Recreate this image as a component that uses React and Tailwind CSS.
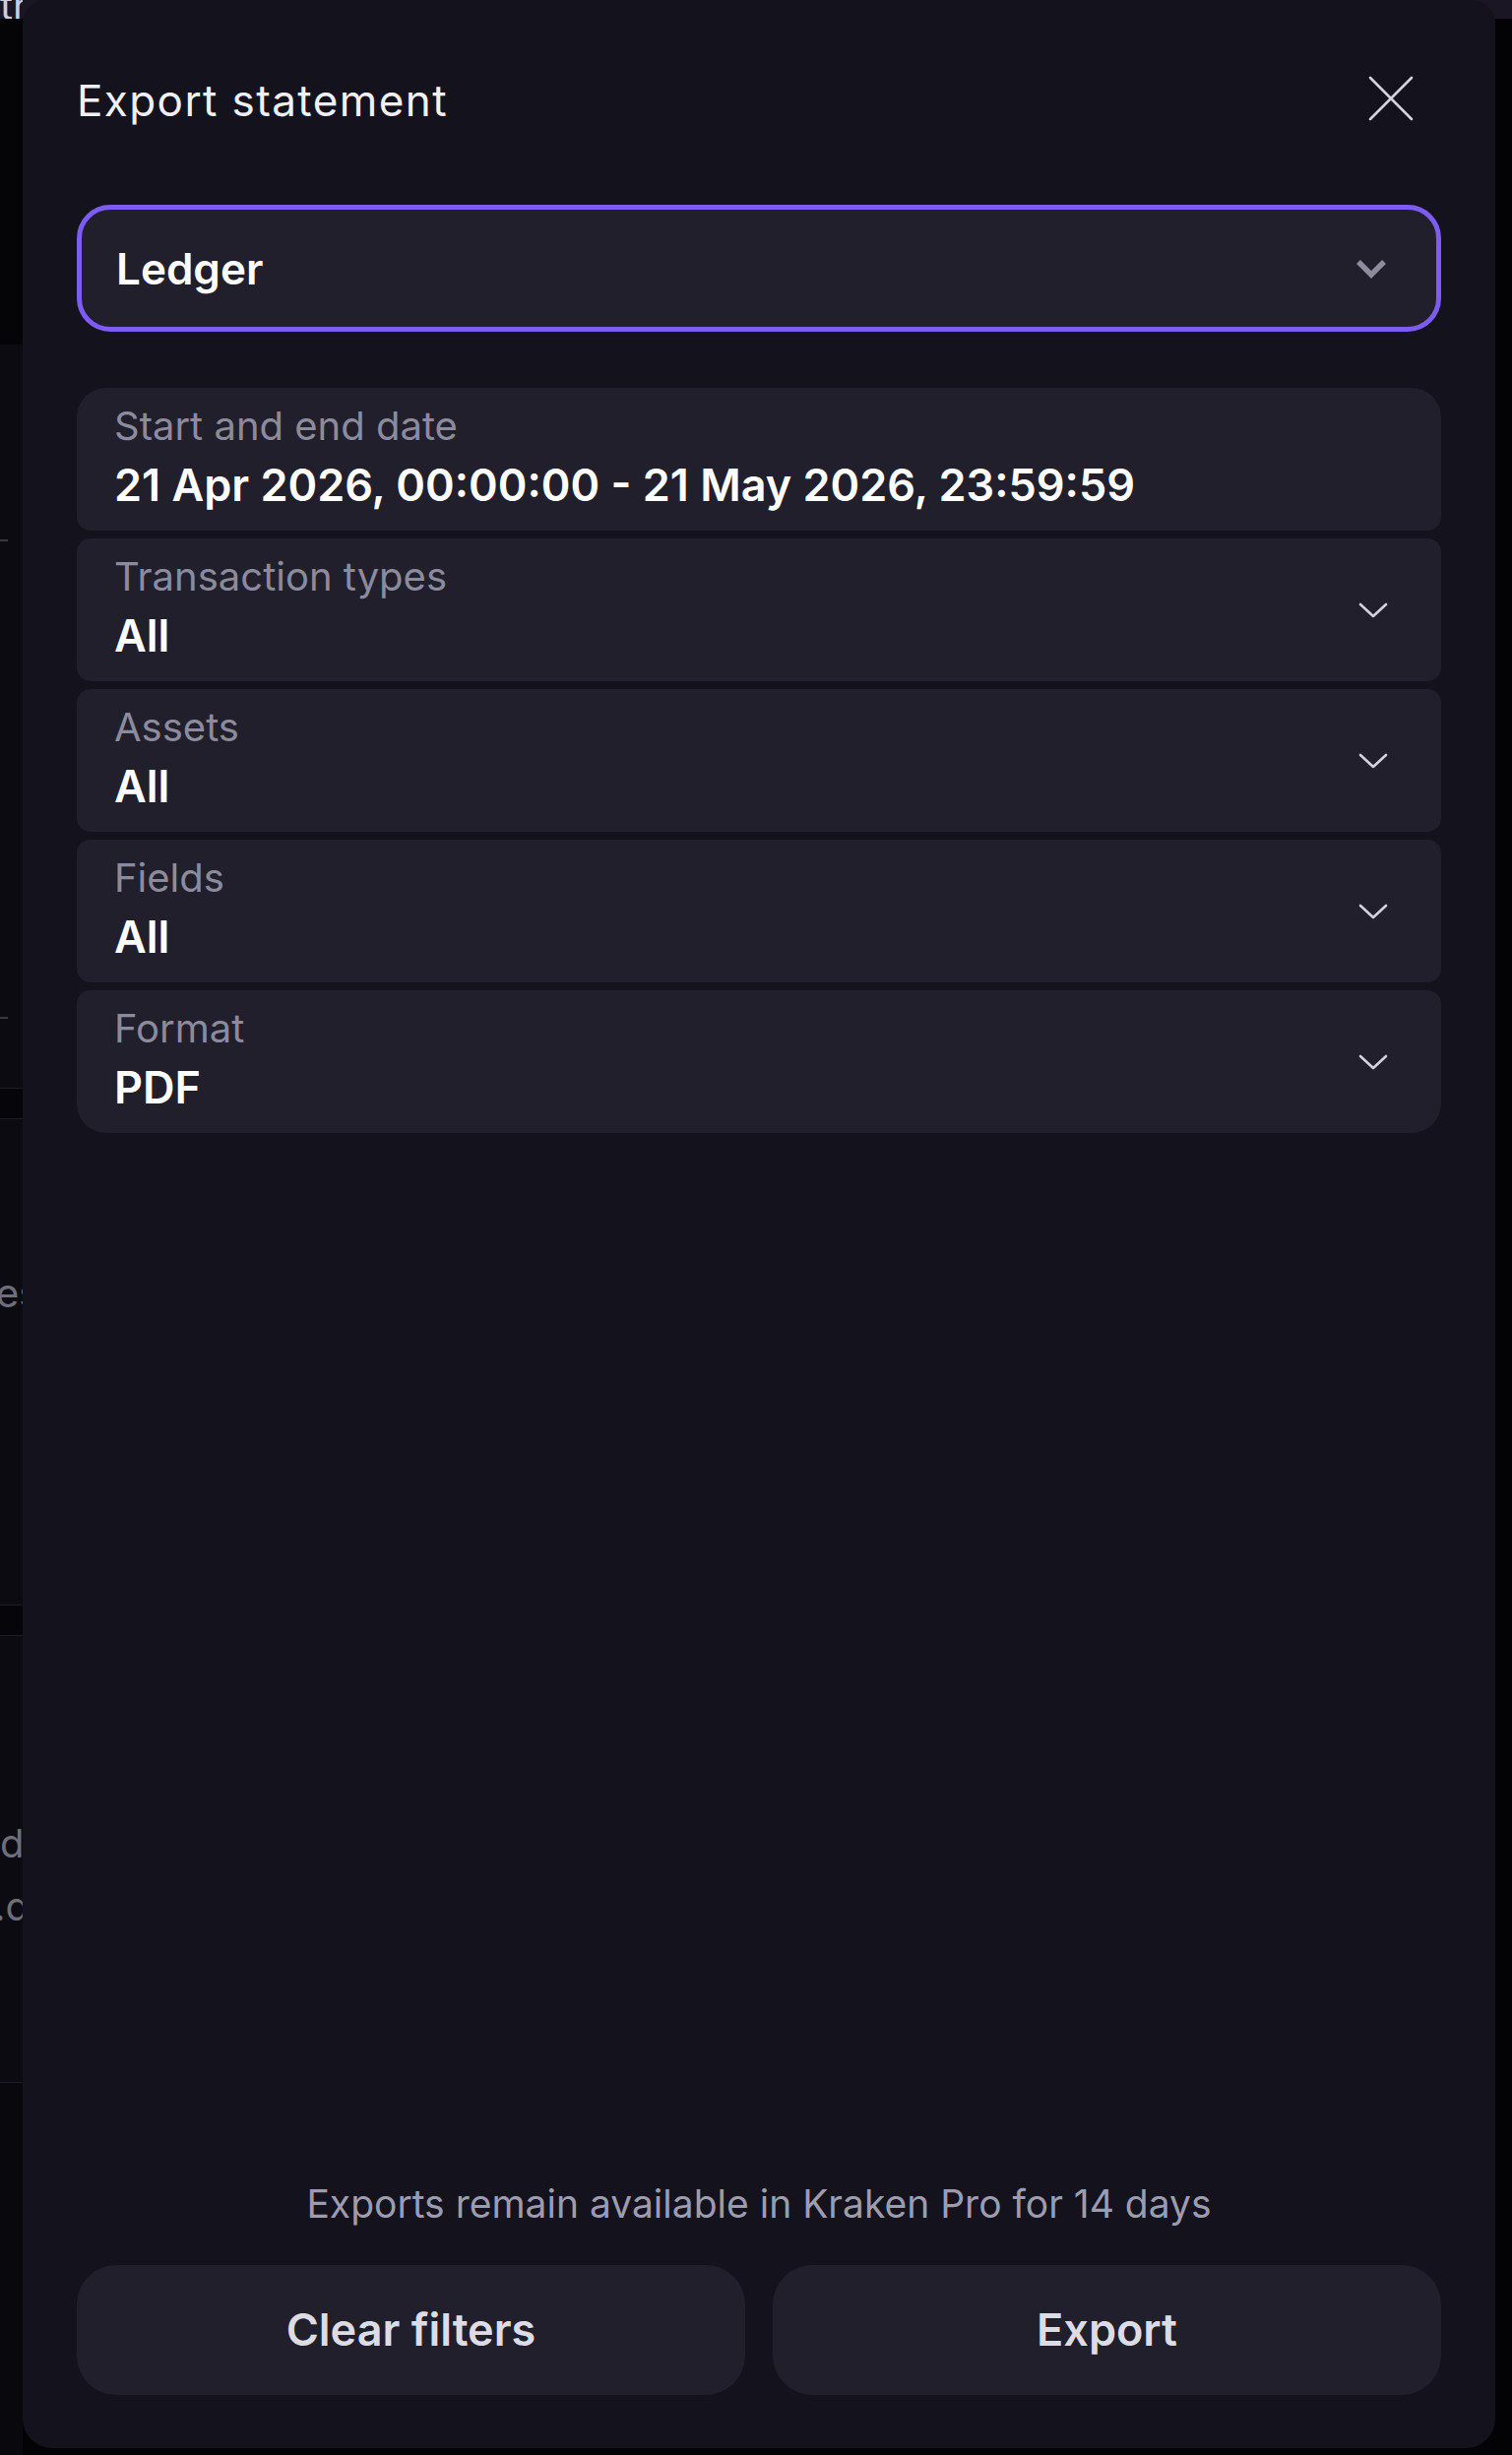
import React from "react";

const fields = [
  {
    label: "Start and end date",
    value: "21 Apr 2026, 00:00:00 - 21 May 2026, 23:59:59",
    select: false,
    shape: "rounded-t-[30px] rounded-b-[14px]",
  },
  { label: "Transaction types", value: "All", select: true, shape: "rounded-[14px]" },
  { label: "Assets", value: "All", select: true, shape: "rounded-[14px]" },
  { label: "Fields", value: "All", select: true, shape: "rounded-[14px]" },
  { label: "Format", value: "PDF", select: true, shape: "rounded-t-[14px] rounded-b-[30px]" },
];

const Chevron = () => (
  <svg width="30" height="16" viewBox="0 0 30 16" fill="none" className="shrink-0">
    <polyline points="2,2 15,14 28,2" stroke="#d3d2dc" strokeWidth="2.6" strokeLinecap="round" strokeLinejoin="round" />
  </svg>
);

const BackStrip = () => (
  <div className="flex w-[23px] shrink-0 flex-col overflow-hidden text-[40px] text-[#6f6d79]">
    <div className="h-[19px] overflow-hidden bg-[#1a1624]">
      <p className="-mt-[14px] whitespace-nowrap leading-none text-[#cfcdd8]">th</p>
    </div>
    <div className="h-[331px] bg-[#050407]" />
    <div className="flex h-[755px] flex-col bg-[#0c0b11]">
      <div className="mt-[198px] h-[2px] w-[8px] bg-[#3a3842]" />
      <div className="mt-[483px] h-[2px] w-[8px] bg-[#3a3842]" />
    </div>
    <div className="h-[32px] border-y border-[#1d1b24] bg-[#060509]" />
    <div className="flex h-[493px] flex-col bg-[#0c0b11]">
      <p className="mt-[157px] -ml-[4px] whitespace-nowrap leading-none">es</p>
    </div>
    <div className="h-[32px] border-y border-[#1d1b24] bg-[#060509]" />
    <div className="flex h-[453px] flex-col bg-[#0c0b11] leading-none">
      <p className="mt-[191px] whitespace-nowrap">di</p>
      <p className="mt-[24px] -ml-[6px] whitespace-nowrap">.d</p>
    </div>
    <div className="flex-1 border-t border-[#1d1b24] bg-[#09080d]" />
  </div>
);

export default function App() {
  return (
    <div className="flex h-[2494px] w-[1536px] bg-[linear-gradient(to_bottom,#1a1624_19px,#030305_19px)] font-['Inter',sans-serif]">
      <BackStrip />

      <div className="flex h-[2487px] w-[1496px] shrink-0 flex-col rounded-t-[24px] rounded-b-[30px] bg-[#14121d] px-[55px] pb-[54px] pt-[74px]">
        <div className="flex h-[56px] items-center justify-between">
          <h2 className="text-[44px] font-normal leading-[56px] tracking-[1.4px] text-[#f1f0f6]">Export statement</h2>
          <button className="mr-[28px] -mt-[4px] flex h-[46px] w-[46px] items-center justify-center">
            <svg width="46" height="46" viewBox="0 0 46 46" fill="none">
              <path d="M2 2L44 44M44 2L2 44" stroke="#d4d3dc" strokeWidth="2.6" strokeLinecap="round" />
            </svg>
          </button>
        </div>

        <div className="mt-[78px] flex h-[129px] items-center justify-between rounded-[34px] border-[5px] border-[#7e5cf3] bg-[#211f2c] pl-[35px] pr-[50px]">
          <span className="text-[44px] font-semibold text-white">Ledger</span>
          <svg width="32" height="20" viewBox="0 0 32 20" fill="none">
            <polyline points="3,3 16,16 29,3" stroke="#8d8c9d" strokeWidth="5.5" />
          </svg>
        </div>

        <div className="mt-[57px] flex flex-col gap-[8px]">
          {fields.map((f) => (
            <div
              key={f.label}
              className={`flex h-[145px] items-center justify-between bg-[#211f2c] pl-[38px] pr-[54px] ${f.shape}`}
            >
              <div className="flex flex-col self-start pt-[11px]">
                <span className="text-[40px] leading-[56px] text-[#8c8b9d]">{f.label}</span>
                <span className="mt-[2px] whitespace-nowrap text-[45px] font-semibold leading-[60px] text-white">{f.value}</span>
              </div>
              {f.select && <Chevron />}
            </div>
          ))}
        </div>

        <div className="flex-1" />

        <p className="text-center text-[39px] leading-[52px] text-[#9d9caf]">
          Exports remain available in Kraken Pro for 14 days
        </p>

        <div className="mt-[36px] grid grid-cols-2 gap-[28px]">
          <button className="h-[132px] rounded-[40px] bg-[#211f2c] text-[45px] font-semibold text-[#dddce5]">Clear filters</button>
          <button className="h-[132px] rounded-[40px] bg-[#211f2c] text-[45px] font-semibold text-[#dddce5]">Export</button>
        </div>
      </div>

      <div className="flex-1" />
    </div>
  );
}
